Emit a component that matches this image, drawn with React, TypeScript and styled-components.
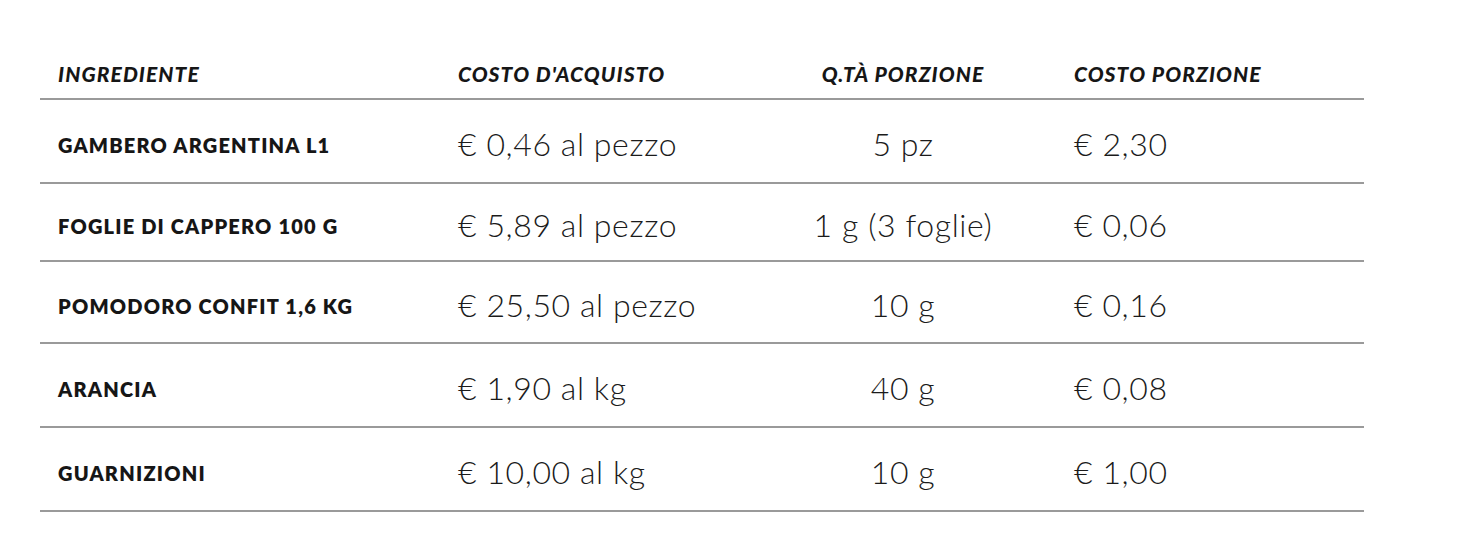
import React from "react";
import styled, { createGlobalStyle } from "styled-components";

const Global = createGlobalStyle`
  html, body { margin: 0; padding: 0; background: #ffffff; }
  body { font-family: Lato, "Liberation Sans", sans-serif; color: #1b1b1b; }
`;

const Page = styled.div`
  padding: 40px 0 0 40px;
  width: 1460px;
  box-sizing: border-box;
`;

const Table = styled.div`
  width: 1324px;
  display: flex;
  flex-direction: column;
`;

const cols = "400px 292px 306px 1fr";

const HeaderRow = styled.div`
  display: grid;
  grid-template-columns: ${cols};
  align-items: center;
  height: 58px;
  padding-left: 18px;
  border-bottom: 2px solid #9a9a9a;
`;

const HeadCell = styled.div<{ $center?: boolean; $pad?: boolean }>`
  font-family: Lato, "Liberation Sans", sans-serif;
  font-weight: 900;
  font-style: italic;
  font-size: 21px;
  letter-spacing: 1.1px;
  color: #161616;
  text-align: ${(p) => (p.$center ? "center" : "left")};
  padding-left: ${(p) => (p.$pad ? "18px" : "0")};
  padding-top: 8px;
`;

const Row = styled.div<{ $h: number }>`
  display: grid;
  grid-template-columns: ${cols};
  align-items: center;
  height: ${(p) => p.$h - 2}px;
  padding-left: 18px;
  border-bottom: 2px solid #9a9a9a;
`;

const NameCell = styled.div`
  font-family: Lato, "Liberation Sans", sans-serif;
  font-weight: 800;
  font-size: 20px;
  letter-spacing: 1.2px;
  color: #161616;
  padding-top: 8px;
`;

const ValueCell = styled.div<{ $center?: boolean; $pad?: boolean }>`
  font-family: Lato, "Liberation Sans", sans-serif;
  font-weight: 300;
  font-size: 32px;
  letter-spacing: 0.6px;
  color: #1b1b1b;
  text-align: ${(p) => (p.$center ? "center" : "left")};
  padding-left: ${(p) => (p.$pad ? "18px" : "0")};
  padding-top: 4px;
`;

const rows = [
  { name: "GAMBERO ARGENTINA L1", cost: "€ 0,46 al pezzo", qty: "5 pz", portion: "€ 2,30", h: 84 },
  { name: "FOGLIE DI CAPPERO 100 G", cost: "€ 5,89 al pezzo", qty: "1 g (3 foglie)", portion: "€ 0,06", h: 78 },
  { name: "POMODORO CONFIT 1,6 KG", cost: "€ 25,50 al pezzo", qty: "10 g", portion: "€ 0,16", h: 82 },
  { name: "ARANCIA", cost: "€ 1,90 al kg", qty: "40 g", portion: "€ 0,08", h: 84 },
  { name: "GUARNIZIONI", cost: "€ 10,00 al kg", qty: "10 g", portion: "€ 1,00", h: 84 },
];

export default function App() {
  return (
    <>
      <Global />
      <Page>
        <Table>
          <HeaderRow>
            <HeadCell>INGREDIENTE</HeadCell>
            <HeadCell>COSTO D'ACQUISTO</HeadCell>
            <HeadCell $center>Q.TÀ PORZIONE</HeadCell>
            <HeadCell $pad>COSTO PORZIONE</HeadCell>
          </HeaderRow>
          {rows.map((r) => (
            <Row key={r.name} $h={r.h}>
              <NameCell>{r.name}</NameCell>
              <ValueCell>{r.cost}</ValueCell>
              <ValueCell $center>{r.qty}</ValueCell>
              <ValueCell $pad>{r.portion}</ValueCell>
            </Row>
          ))}
        </Table>
      </Page>
    </>
  );
}
